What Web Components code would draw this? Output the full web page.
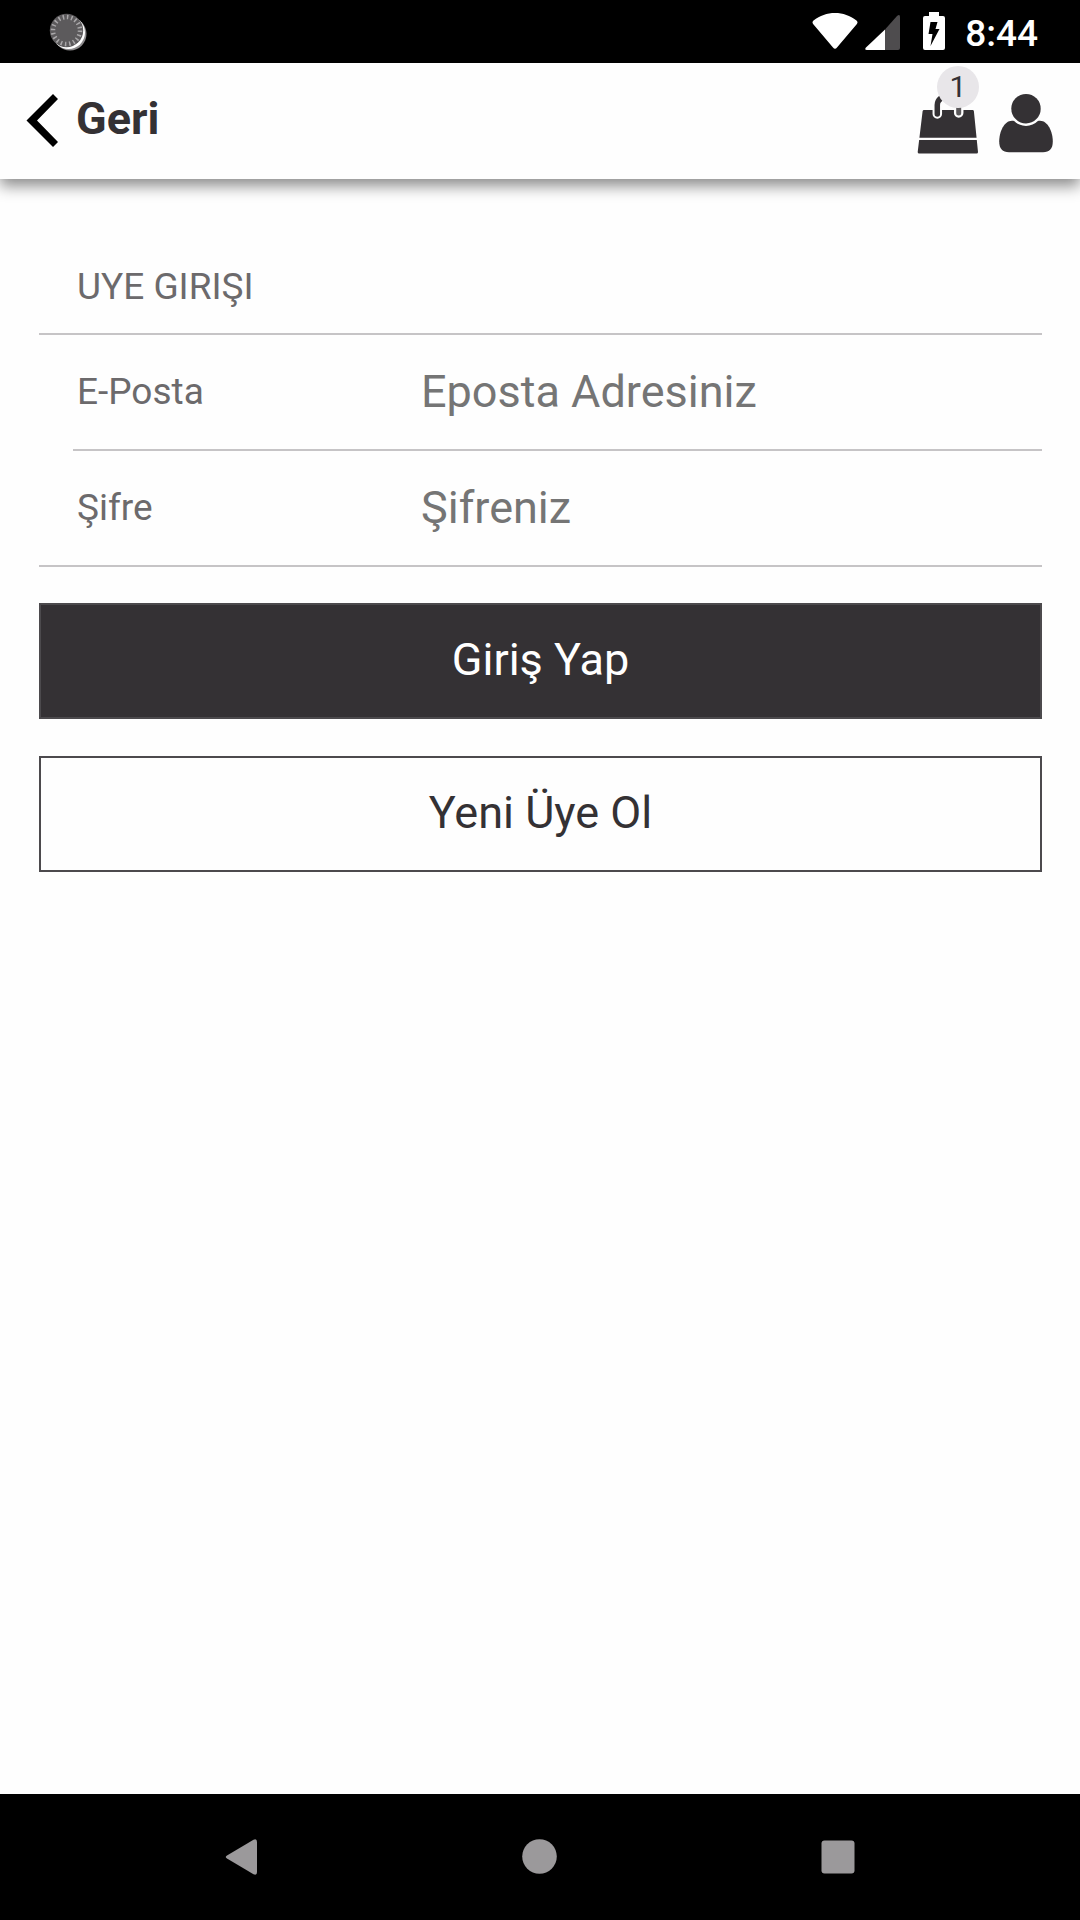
<!DOCTYPE html>
<html lang="tr">
<head>
<meta charset="utf-8">
<meta name="viewport" content="width=device-width, initial-scale=1">
<title>Üye Girişi</title>
<style>
  body {
    margin: 0;
    background: #fefefe;
    font-family: Roboto, "Noto Sans", sans-serif;
    --ink: #343134;
    --label: #6c6a6c;
    --hint: #757575;
    --rule: #c6c4c6;
    --text-s: 37px;
    --text-m: 45px;
  }
</style>
</head>
<body>
<login-page></login-page>
<script>
const define = (name, html, setup) => {
  const template = document.createElement('template');
  template.innerHTML = html;
  customElements.define(name, class extends HTMLElement {
    constructor() {
      super();
      this.attachShadow({ mode: 'open' }).append(template.content.cloneNode(true));
    }
    connectedCallback() {
      if (setup) setup(this, this.shadowRoot);
    }
  });
};

define('status-bar', `
  <style>
    :host { display: flex; align-items: center; height: 63px; padding: 0 42px 0 49px; background: #000; color: #fff; }
    svg { display: block; flex: none; }
    .spinner { margin-right: auto; }
    .signal { margin: 0 22px 0 7px; }
    time { margin-left: 20px; padding-top: 4px; font-size: var(--text-s); font-weight: 500; line-height: 44px; }
  </style>
  <svg class="spinner" width="38" height="39" viewBox="0 0 38 39" aria-hidden="true">
    <circle cx="21" cy="22" r="16.5" fill="#8c8a8c"/>
    <circle cx="19.5" cy="20.500" r="16.500" fill="#fff"/>
    <circle cx="17.500" cy="18.500" r="16.700" fill="#5c5a5c"/>
    <circle cx="17.500" cy="18.500" r="13.500" fill="none" stroke="#a9a7a9" stroke-width="4.500" stroke-dasharray="1.500 2.741"/>
  </svg>
  <svg width="46" height="39" viewBox="0 0 46 39" aria-hidden="true">
    <path fill="#fff" d="M1.500 8.500C8 3.500 15 1 23 1S38 3.500 44.500 8.500Q46.300 10 44.900 12L25 35.500Q23 38 21 35.500L1.100 12Q-.300 10 1.500 8.500Z"/>
  </svg>
  <svg class="signal" width="36" height="39" viewBox="0 0 36 39" aria-hidden="true">
    <path fill="#4e4c4e" d="M20 17.500 32 4Q35 1.500 35 5V36Q35 38 33 38H20Z"/>
    <path fill="#fff" d="M20 17.500V38H2Q-1 38 1 35.500Z"/>
  </svg>
  <svg width="22" height="39" viewBox="0 0 22 39" aria-hidden="true">
    <path fill="#fff" d="M6 0H16V4H20Q22 4 22 6V36Q22 38 20 38H2Q0 38 0 36V6Q0 4 2 4H6Z"/>
    <path fill="#000" d="M7.500 10H14.500L12.500 17H16.500L7.500 34L9.500 22H5.500Z"/>
  </svg>
  <time>8:44</time>
`);

define('app-header', `
  <style>
    :host { display: flex; align-items: center; justify-content: space-between; height: 115px; padding: 0 26px 1px; background: #fefefe; box-shadow: 0 7px 14px rgba(0, 0, 0, .45); position: relative; }
    button { border: 0; padding: 0; background: none; color: var(--ink); font: inherit; }
    svg { display: block; }
    .back { display: flex; align-items: center; gap: 17px; font-size: var(--text-m); font-weight: 700; line-height: 52px; }
    .back span { padding-bottom: 3px; }
    .actions { display: flex; gap: 18px; }
    .bag { position: relative; }
    .badge { position: absolute; left: 21px; top: -21px; width: 42px; height: 42px; border-radius: 50%; background: #e8e6e9; font-size: 30px; line-height: 42px; text-align: center; }
  </style>
  <button class="back" type="button">
    <svg width="33" height="55" viewBox="0 0 33 55" aria-hidden="true"><path fill="#000" d="M27 1 32 6 11 27.500 32 49 27 54 .500 27.500Z"/></svg>
    <span><slot></slot></span>
  </button>
  <div class="actions">
    <button class="bag" type="button" aria-label="Sepet">
      <svg width="64" height="67" viewBox="0 0 64 67" aria-hidden="true">
        <path fill="#343134" d="M8 23H56.500Q57.800 23 57.900 24.200L62 65Q62.100 66.500 60.500 66.500H3.200Q1.600 66.500 1.700 65L6.600 24.200Q6.800 23 8 23Z"/>
        <path fill="#fefefe" d="M0 50.700H64V53H0Z"/>
        <path fill="none" stroke="#fefefe" stroke-width="9.500" stroke-linecap="round" d="M21.300 27V17Q21.300 11 27 8M42.700 26V17"/>
        <path fill="none" stroke="#343134" stroke-width="5.500" stroke-linecap="round" d="M21.300 27V18Q21.300 14 25 11"/>
        <path fill="none" stroke="#5a585a" stroke-width="5" stroke-linecap="round" d="M42.700 26V17"/>
      </svg>
      <span class="badge"></span>
    </button>
    <button type="button" aria-label="Hesap">
      <svg width="56" height="67" viewBox="0 0 56 67" aria-hidden="true">
        <path fill="#343134" d="M14 33.700H42C50 33.700 54.800 45 54.800 54.500C54.800 61.500 51.500 65.300 45 65.300H11C4.500 65.300 1.200 61.500 1.200 54.500C1.200 45 6 33.700 14 33.700Z"/>
        <circle cx="28" cy="21.700" r="17.200" fill="#fefefe"/>
        <circle cx="28" cy="21.700" r="14.700" fill="#343134"/>
      </svg>
    </button>
  </div>
`, (host, root) => {
  root.querySelector('.badge').textContent = host.getAttribute('count');
});

define('form-field', `
  <style>
    :host { display: flex; align-items: center; height: 114px; padding-left: 38px; border-bottom: 2px solid var(--rule); }
    :host([inset]) { margin-left: 34px; padding-left: 4px; }
    label { flex: none; width: 344px; color: var(--label); font-size: var(--text-s); line-height: 44px; }
    input { flex: 1; min-width: 0; border: 0; padding: 0; background: none; outline: 0; color: var(--ink); font: inherit; font-size: var(--text-m); line-height: 54px; }
    input::placeholder { color: var(--hint); opacity: 1; }
  </style>
  <label for="field"></label>
  <input id="field">
`, (host, root) => {
  root.querySelector('label').textContent = host.getAttribute('label');
  const input = root.querySelector('input');
  input.type = host.getAttribute('type');
  input.placeholder = host.getAttribute('hint');
});

define('action-button', `
  <style>
    :host { display: block; }
    button { display: block; width: 100%; height: 116px; border: 2px solid #4c4a4d; padding: 0 0 2px; background: none; color: var(--ink); font: inherit; font-size: var(--text-m); line-height: 54px; }
    :host([primary]) button { background: var(--ink); color: #fff; }
  </style>
  <button type="button"><slot></slot></button>
`);

define('nav-bar', `
  <style>
    :host { display: flex; height: 126px; padding: 0 93px; background: #000; }
    button { flex: 1; display: flex; align-items: center; justify-content: center; border: 0; padding: 0; background: none; }
    svg { fill: #9b999b; }
  </style>
  <button type="button" aria-label="Geri"><svg width="36" height="36" viewBox="0 0 36 36"><path d="M3 16.500 29.500 .800Q33 -.800 33 3V33Q33 36.800 29.500 35.200L3 19.500Q.500 18 3 16.500Z"/></svg></button>
  <button type="button" aria-label="Ana ekran"><svg width="36" height="36" viewBox="0 0 36 36"><circle cx="17.500" cy="17.500" r="17.300"/></svg></button>
  <button type="button" aria-label="Son uygulamalar"><svg width="36" height="36" viewBox="0 0 36 36"><rect x="1.500" y="1.500" width="33" height="33" rx="3"/></svg></button>
`);

define('login-form', `
  <style>
    :host { display: block; padding: 58px 38px 58px 39px; }
    h1 { margin: 0; padding: 29px 38px 25px; border-bottom: 2px solid var(--rule); color: var(--label); font-size: var(--text-s); font-weight: 400; line-height: 42px; }
    .buttons { display: flex; flex-direction: column; gap: 37px; padding-top: 36px; }
  </style>
  <form>
    <h1>UYE GIRIŞI</h1>
    <form-field inset label="E-Posta" type="email" hint="Eposta Adresiniz"></form-field>
    <form-field label="Şifre" type="password" hint="Şifreniz"></form-field>
    <div class="buttons">
      <action-button primary>Giriş Yap</action-button>
      <action-button>Yeni Üye Ol</action-button>
    </div>
  </form>
`);

define('login-page', `
  <style>
    :host { display: flex; flex-direction: column; min-height: 100vh; }
    main { flex: 1; }
  </style>
  <status-bar></status-bar>
  <app-header count="1">Geri</app-header>
  <main><login-form></login-form></main>
  <nav-bar></nav-bar>
`);
</script>
</body>
</html>
